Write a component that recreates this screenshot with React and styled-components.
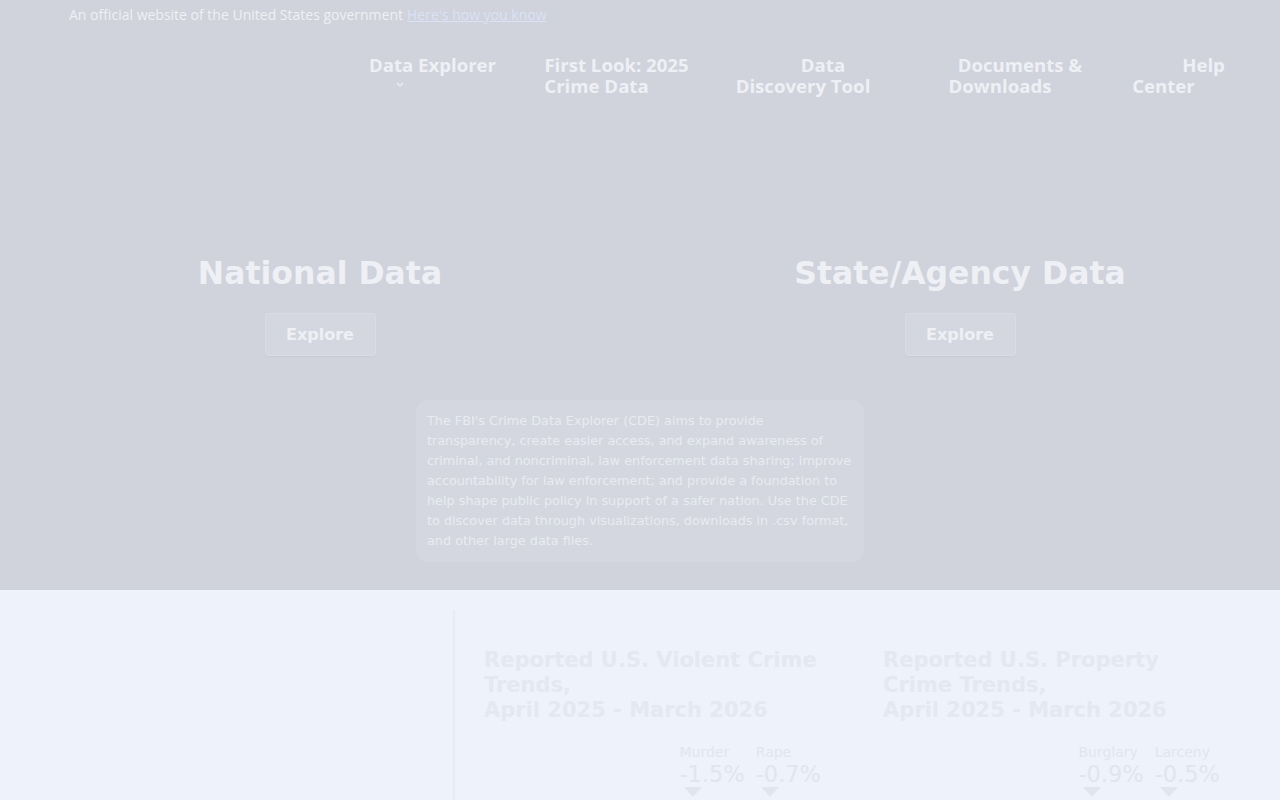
import React from 'react';
import styled, { createGlobalStyle } from 'styled-components';

const GlobalStyle = createGlobalStyle`
  html, body {
    margin: 0;
    padding: 0;
    background: #eef2fb;
  }
  body {
    font-family: 'DejaVu Sans', sans-serif;
    width: 1280px;
    height: 800px;
    overflow: hidden;
  }
  * {
    box-sizing: border-box;
  }
`;

const Hero = styled.header`
  background: #d0d3db;
  height: 590px;
  display: flex;
  flex-direction: column;
`;

const Banner = styled.div`
  height: 28px;
  padding-left: 69px;
  display: flex;
  align-items: center;
  font-family: 'Open Sans', 'Liberation Sans', sans-serif;
  font-size: 14px;
  color: #eef0f6;
`;

const BannerLink = styled.a`
  color: #d9e2f8;
  text-decoration: underline;
  margin-left: 4px;
`;

const Nav = styled.nav`
  display: flex;
  align-items: flex-start;
  padding: 26px 0 0 328px;
  height: 90px;
`;

const NavItem = styled.div`
  flex: none;
  width: ${p => p.$width}px;
  margin-left: ${p => p.$gap}px;
  text-align: center;
  text-indent: ${p => p.$indent}px;
  white-space: nowrap;
  font-family: 'Open Sans', 'Liberation Sans', sans-serif;
  font-weight: 700;
  font-size: 18.6px;
  line-height: 21px;
  color: #eef0f6;
`;

const Chevron = styled.svg`
  display: block;
  margin: 7px 0 0 68px;
`;

const Panels = styled.div`
  display: grid;
  grid-template-columns: 1fr 1fr;
  margin-top: 136px;
`;

const Panel = styled.div`
  display: flex;
  flex-direction: column;
  align-items: center;
`;

const PanelTitle = styled.h2`
  margin: 0;
  font-size: 31.5px;
  line-height: 38px;
  font-weight: 700;
  color: #eef0f6;
`;

const ExploreButton = styled.button`
  margin-top: 21px;
  width: 111px;
  height: 43px;
  background: #d4d7df;
  border: 1px solid #d9dce4;
  border-radius: 3px;
  font-family: 'DejaVu Sans', sans-serif;
  font-weight: 700;
  font-size: 16px;
  color: #eef0f6;
  box-shadow: 0 1px 1px rgba(160, 165, 180, 0.15);
`;

const About = styled.p`
  align-self: center;
  width: 448px;
  margin: 44px 0 0;
  padding: 11px 8px 11px 11px;
  background: #d4d7df;
  border-radius: 12px;
  font-size: 12.8px;
  line-height: 20px;
  color: #e8ebf2;
`;

const Trends = styled.section`
  display: flex;
  padding: 20px 0 0 453px;
`;

const Column = styled.div`
  flex: none;
  width: ${p => p.$width}px;
  padding-left: ${p => p.$inset}px;
  padding-top: 38px;
  border-left: ${p => (p.$rule ? '2px solid #e8ebf4' : 'none')};
  min-height: 200px;
`;

const TrendTitle = styled.h3`
  margin: 0;
  width: 340px;
  font-size: 21px;
  line-height: 25px;
  font-weight: 700;
  color: #e5e8f1;
`;

const Stats = styled.div`
  display: flex;
  justify-content: flex-end;
  gap: 11px;
  width: 337px;
  margin-top: 21px;
`;

const Stat = styled.div`
  display: flex;
  flex-direction: column;
  color: #e2e5ee;
`;

const StatLabel = styled.span`
  font-size: 14px;
  line-height: 17px;
`;

const StatValue = styled.span`
  font-size: 22.5px;
  line-height: 26px;
`;

const Arrow = styled.span`
  width: 0;
  height: 0;
  margin: 0 0 0 5px;
  border-left: 9px solid transparent;
  border-right: 9px solid transparent;
  border-top: 10px solid #e2e5ee;
`;

const navItems = [
  { lines: ['Data Explorer'], width: 169, gap: 0, indent: 40, menu: true },
  { lines: ['First Look: 2025', 'Crime Data'], width: 193, gap: 3, indent: 40 },
  { lines: ['Data', 'Discovery Tool'], width: 136, gap: 42, indent: 40 },
  { lines: ['Documents &', 'Downloads'], width: 166, gap: 46, indent: 40 },
  { lines: ['Help', 'Center'], width: 123, gap: 19, indent: 80 },
];

const trends = [
  {
    title: 'Reported U.S. Violent Crime Trends,',
    stats: [['Murder', '-1.5%'], ['Rape', '-0.7%']],
  },
  {
    title: 'Reported U.S. Property Crime Trends,',
    stats: [['Burglary', '-0.9%'], ['Larceny', '-0.5%']],
  },
];

export default function App() {
  return (
    <>
      <GlobalStyle />
      <Hero>
        <Banner>
          An official website of the United States government
          <BannerLink href="#">Here's how you know</BannerLink>
        </Banner>
        <Nav>
          {navItems.map(item => (
            <NavItem key={item.lines[0]} $width={item.width} $gap={item.gap} $indent={item.indent}>
              {item.lines.map((l, i) => (
                <React.Fragment key={l}>
                  {i > 0 && <br />}
                  {l}
                </React.Fragment>
              ))}
              {item.menu && (
                <Chevron width="8" height="5" viewBox="0 0 8 5">
                  <path d="M1 1l3 3 3-3" fill="none" stroke="#eef0f6" strokeWidth="1.2" />
                </Chevron>
              )}
            </NavItem>
          ))}
        </Nav>
        <Panels>
          <Panel>
            <PanelTitle>National Data</PanelTitle>
            <ExploreButton>Explore</ExploreButton>
          </Panel>
          <Panel>
            <PanelTitle>State/Agency Data</PanelTitle>
            <ExploreButton>Explore</ExploreButton>
          </Panel>
        </Panels>
        <About>
          The FBI's Crime Data Explorer (CDE) aims to provide transparency, create easier access,
          and expand awareness of criminal, and noncriminal, law enforcement data sharing; improve
          accountability for law enforcement; and provide a foundation to help shape public policy
          in support of a safer nation. Use the CDE to discover data through visualizations,
          downloads in .csv format, and other large data files.
        </About>
      </Hero>
      <Trends>
        {trends.map((t, i) => (
          <Column key={t.title} $rule={i === 0} $inset={i === 0 ? 29 : 0} $width={i === 0 ? 430 : 397}>
            <TrendTitle>
              {t.title}
              <br />
              April 2025 - March 2026
            </TrendTitle>
            <Stats>
              {t.stats.map(([label, value]) => (
                <Stat key={label}>
                  <StatLabel>{label}</StatLabel>
                  <StatValue>{value}</StatValue>
                  <Arrow />
                </Stat>
              ))}
            </Stats>
          </Column>
        ))}
      </Trends>
    </>
  );
}
